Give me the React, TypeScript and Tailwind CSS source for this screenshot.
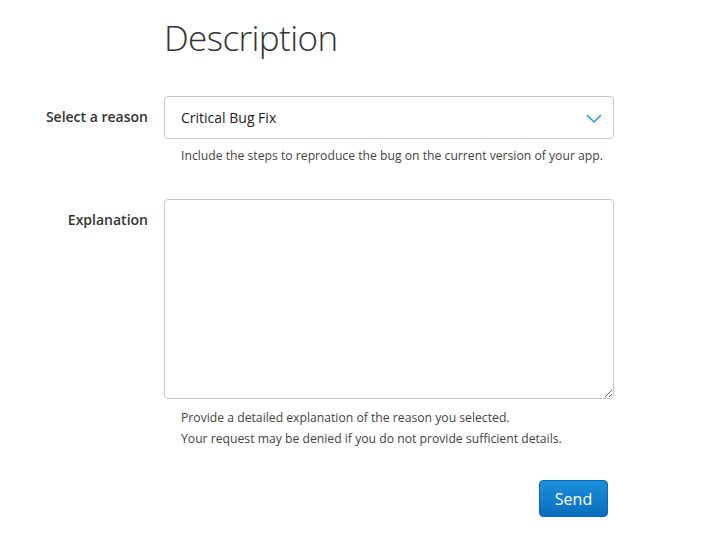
import React from "react";

export default function App() {
  return (
    <div
      className="w-[705px] h-[549px] bg-white text-[#333]"
      style={{ fontFamily: '"Open Sans", "Noto Sans", sans-serif' }}
    >
      <div className="pl-[164px] pt-[14px]">
        <h1 className="text-[35px] font-light leading-[48px] text-[#333] tracking-[-0.6px]">Description</h1>
      </div>
      <div className="mt-[34px] flex">
        <div className="w-[148px] pt-[10px] text-right text-[14px] font-semibold text-[#333]">Select a reason</div>
        <div className="ml-[16px] w-[450px]">
          <div className="h-[43px] rounded-[4px] border border-[#c8c8c8] flex items-center justify-between pl-[16px] pr-[10px] text-[14px] text-[#222]">
            <span>Critical Bug Fix</span>
            <svg width="18" height="12" viewBox="0 0 18 12" fill="none">
              <path d="M2 3 L9 10 L16 3" stroke="#1a9ad6" strokeWidth="1.5" />
            </svg>
          </div>
          <p className="mt-[8px] pl-[17px] text-[12.2px] text-[#444]">
            Include the steps to reproduce the bug on the current version of your app.
          </p>
        </div>
      </div>
      <div className="mt-[34px] flex">
        <div className="w-[148px] pt-[10px] text-right text-[14px] font-semibold text-[#333]">Explanation</div>
        <div className="ml-[16px] w-[450px]">
          <textarea className="block w-full h-[200px] rounded-[4px] border border-[#c8c8c8] resize-y outline-none" />
          <div className="mt-[8px] pl-[17px] text-[12.2px] leading-[21px] text-[#444]">
            <p>Provide a detailed explanation of the reason you selected.</p>
            <p>Your request may be denied if you do not provide sufficient details.</p>
          </div>
          <div className="mt-[31px] flex justify-end pr-[6px]">
            <button className="w-[69px] h-[37px] rounded-[4px] text-white text-[16px] bg-gradient-to-b from-[#1d8fd8] to-[#0a6dbf] border border-[#0b6ab8]">
              Send
            </button>
          </div>
        </div>
      </div>
    </div>
  );
}
